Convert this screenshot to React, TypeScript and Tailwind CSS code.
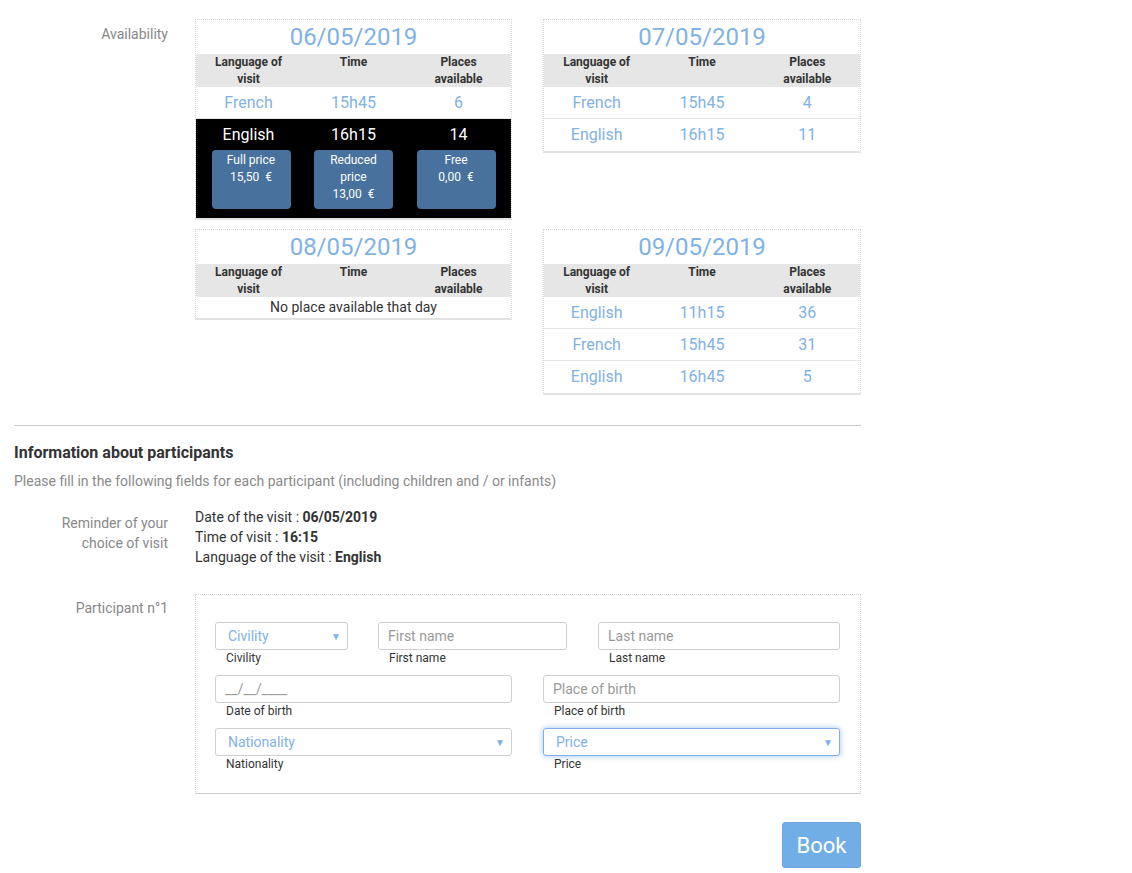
import React from "react";

type Slot = { lang: string; time: string; places: string; selected?: boolean };

const days: { date: string; slots: Slot[] }[] = [
  {
    date: "06/05/2019",
    slots: [
      { lang: "French", time: "15h45", places: "6" },
      { lang: "English", time: "16h15", places: "14", selected: true },
    ],
  },
  {
    date: "07/05/2019",
    slots: [
      { lang: "French", time: "15h45", places: "4" },
      { lang: "English", time: "16h15", places: "11" },
    ],
  },
  { date: "08/05/2019", slots: [] },
  {
    date: "09/05/2019",
    slots: [
      { lang: "English", time: "11h15", places: "36" },
      { lang: "French", time: "15h45", places: "31" },
      { lang: "English", time: "16h45", places: "5" },
    ],
  },
];

const prices = [
  { label: ["Full price"], amount: "15,50  €" },
  { label: ["Reduced", "price"], amount: "13,00  €" },
  { label: ["Free"], amount: "0,00  €" },
];

function DayCard({ date, slots }: { date: string; slots: Slot[] }) {
  return (
    <div className="border border-dotted border-[#d6d6d6] [border-bottom-style:solid] border-b-2 border-b-[#e2e2e2]">
      <div className="h-[34px] text-center text-[24px] leading-[34px] text-[#7fb2e5]">{date}</div>
      <div className="grid h-[33px] grid-cols-3 bg-[#e6e6e6] text-center text-[12px] font-bold leading-[17px] text-[#333]">
        <div>
          Language of
          <br />
          visit
        </div>
        <div>Time</div>
        <div>
          Places
          <br />
          available
        </div>
      </div>
      {slots.length === 0 && (
        <div className="h-[21px] text-center text-[14px] leading-[20px] text-[#333]">No place available that day</div>
      )}
      {slots.map((s, i) =>
        s.selected ? (
          <div key={i} className="bg-black pb-[9px]">
            <div className="grid h-[31px] grid-cols-3 text-center text-[16px] leading-[31px] text-white">
              <div>{s.lang}</div>
              <div>{s.time}</div>
              <div>{s.places}</div>
            </div>
            <div className="flex justify-center gap-[23.5px]">
              {prices.map((p) => (
                <div
                  key={p.amount}
                  className="h-[59px] w-[79px] cursor-pointer rounded-[4px] bg-[#48729d] pt-[2px] text-center text-[12px] leading-[17px] text-white"
                >
                  {p.label.map((l) => (
                    <div key={l}>{l}</div>
                  ))}
                  <div className="whitespace-pre">{p.amount}</div>
                </div>
              ))}
            </div>
          </div>
        ) : (
          <div
            key={i}
            className={`grid h-[32px] grid-cols-3 text-center text-[16px] leading-[31px] text-[#7fb2e5] ${
              i < slots.length - 1 ? "border-b border-[#e6e6e6]" : ""
            }`}
          >
            <div>{s.lang}</div>
            <div>{s.time}</div>
            <div>{s.places}</div>
          </div>
        )
      )}
    </div>
  );
}

function Arrow() {
  return <span className="text-[10px] text-[#7fb2e5]">▼</span>;
}

function Field({
  label,
  placeholder,
  select,
  focus,
  className,
}: {
  label: string;
  placeholder: string;
  select?: boolean;
  focus?: boolean;
  className?: string;
}) {
  return (
    <div className={className}>
      <div
        className={`flex h-[28px] items-center justify-between rounded-[3px] border bg-white pr-[6px] text-[14px] ${
          focus ? "border-[#80aee6] shadow-[0_0_6px_rgba(102,160,230,0.6)]" : "border-[#cfcfcf]"
        } ${select ? "pl-[12px] text-[#7fb2e5]" : "pl-[9px] text-[#9a9a9a]"}`}
      >
        <span>{placeholder}</span>
        {select && <Arrow />}
      </div>
      <div className="mt-[1px] pl-[11px] text-[12px] leading-[15px] text-[#333]">{label}</div>
    </div>
  );
}

export default function App() {
  return (
    <div className="h-[873px] w-[1132px] bg-white font-['Roboto',sans-serif]">
      <div className="w-[861px] pl-[14px] pt-[19px]">
        <div className="grid grid-cols-[154px_1fr] gap-x-[27px]">
          <div className="pt-[6px] text-right text-[14px] leading-[18px] text-[#888]">Availability</div>
          <div className="grid grid-cols-[317px_318px] items-start gap-x-[31px] gap-y-[9px]">
            {days.map((d) => (
              <DayCard key={d.date} date={d.date} slots={d.slots} />
            ))}
          </div>
        </div>

        <div className="mt-[30px] border-t border-[#cccccc]" />

        <h2 className="mt-[17px] text-[16px] font-bold leading-[20px] text-[#333]">Information about participants</h2>
        <p className="mt-[8px] text-[14px] leading-[20px] text-[#8a8a8a]">
          Please fill in the following fields for each participant (including children and / or infants)
        </p>

        <div className="mt-[16px] grid grid-cols-[154px_1fr] gap-x-[27px]">
          <div className="pt-[6px] text-right text-[14px] leading-[20px] text-[#888]">
            Reminder of your
            <br />
            choice of visit
          </div>
          <div className="text-[14px] leading-[20px] text-[#333]">
            <div>
              Date of the visit : <b>06/05/2019</b>
            </div>
            <div>
              Time of visit : <b>16:15</b>
            </div>
            <div>
              Language of the visit : <b>English</b>
            </div>
          </div>
        </div>

        <div className="mt-[27px] grid grid-cols-[154px_1fr] gap-x-[27px]">
          <div className="pt-[6px] text-right text-[14px] leading-[16px] text-[#888]">Participant n°1</div>
          <div className="h-[200px] border border-dotted border-[#cfcfcf] [border-bottom-style:solid] px-[19px] pt-[27px]">
            <div className="flex w-[625px] flex-col gap-[9px]">
              <div className="flex">
                <Field className="w-[133px]" label="Civility" placeholder="Civility" select />
                <Field className="ml-[30px] w-[189px]" label="First name" placeholder="First name" />
                <Field className="ml-[31px] w-[242px]" label="Last name" placeholder="Last name" />
              </div>
              <div className="flex gap-[31px]">
                <Field className="w-[297px]" label="Date of birth" placeholder="__/__/____" />
                <Field className="w-[297px]" label="Place of birth" placeholder="Place of birth" />
              </div>
              <div className="flex gap-[31px]">
                <Field className="w-[297px]" label="Nationality" placeholder="Nationality" select />
                <Field className="w-[297px]" label="Price" placeholder="Price" select focus />
              </div>
            </div>
          </div>
        </div>

        <div className="mt-[28px] flex justify-end">
          <button className="h-[46px] w-[79px] rounded-[3px] border border-[#6aa5dc] bg-[#72aee6] text-[22px] text-white">
            Book
          </button>
        </div>
      </div>
    </div>
  );
}
